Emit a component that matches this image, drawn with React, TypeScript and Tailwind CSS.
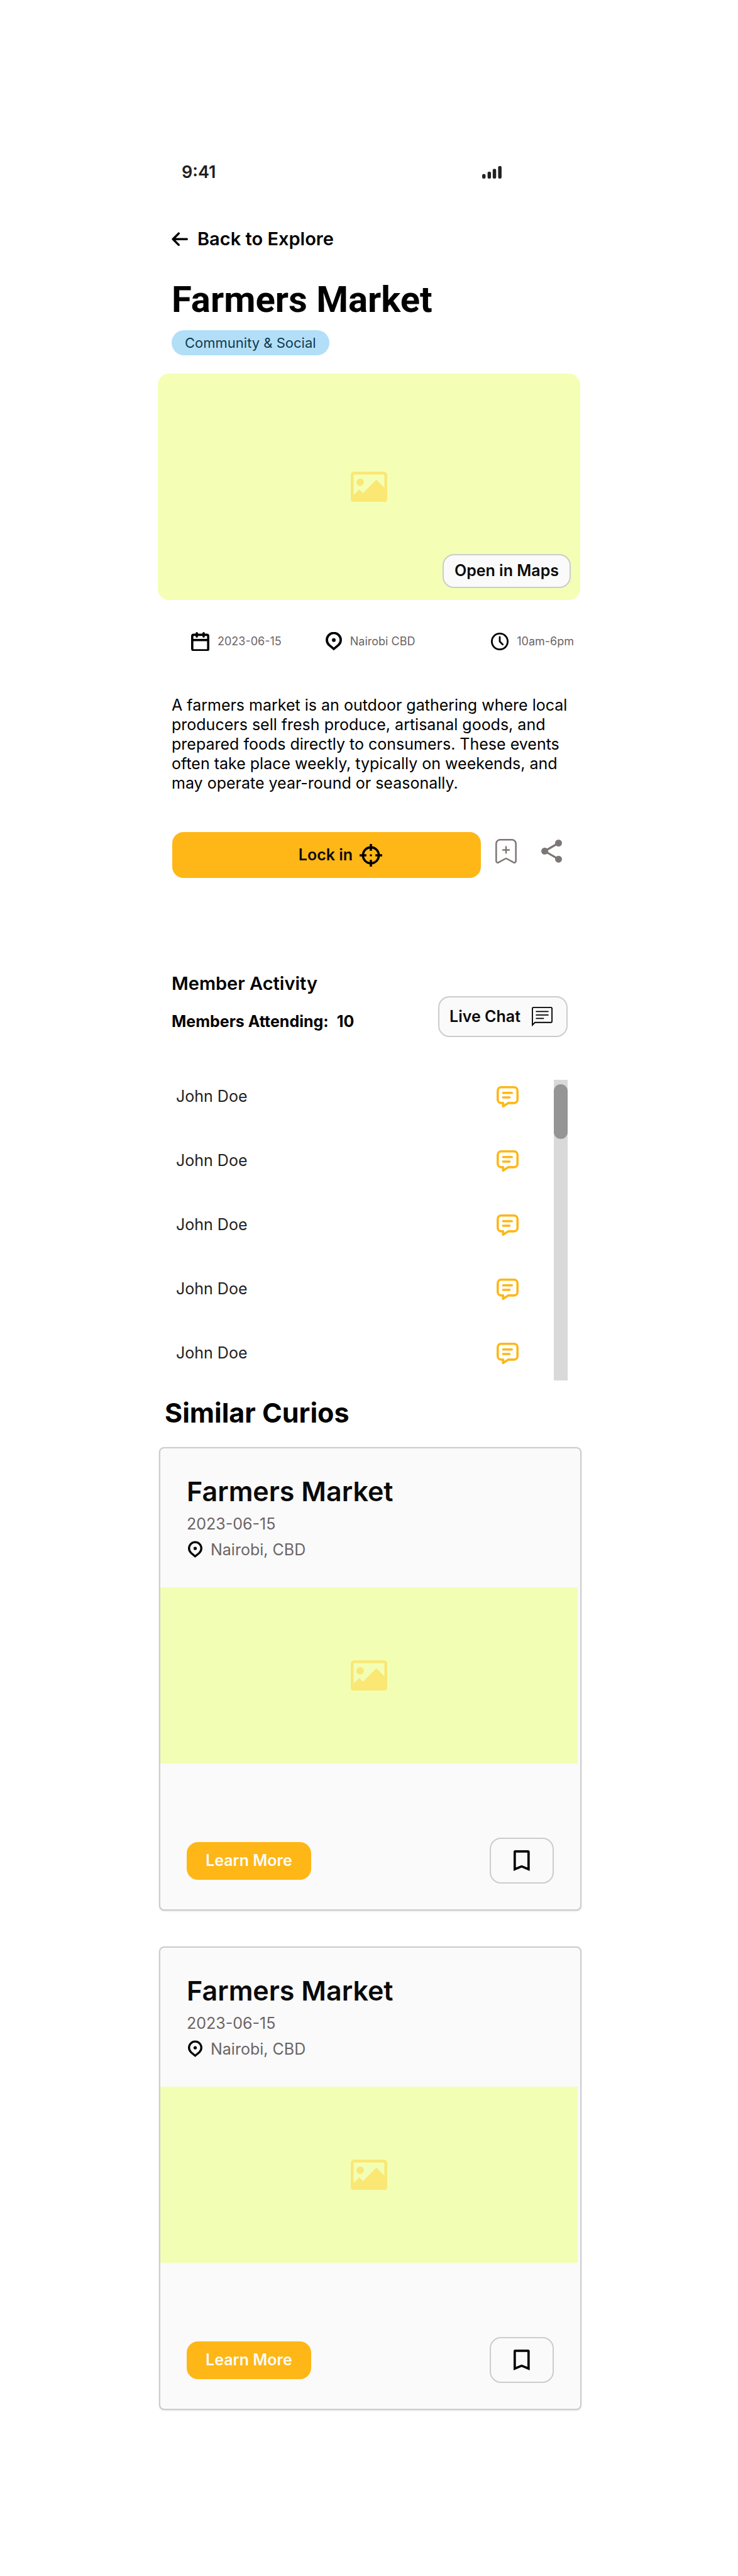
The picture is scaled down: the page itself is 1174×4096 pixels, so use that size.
import { useState } from "react";
import type { ReactNode } from "react";
import clsx from "clsx";

type Curio = {
  id: string;
  title: string;
  date: string;
  place: string;
};

const members = ["John Doe", "John Doe", "John Doe", "John Doe", "John Doe"];

const curios: Curio[] = [
  { id: "curio-1", title: "Farmers Market", date: "2023-06-15", place: "Nairobi, CBD" },
  { id: "curio-2", title: "Farmers Market", date: "2023-06-15", place: "Nairobi, CBD" },
];

function SignalIcon({ className }: { className?: string }) {
  return (
    <svg viewBox="0 0 34 22" fill="#212121" className={className} aria-hidden="true">
      <rect x="0" y="14" width="6" height="8" rx="2.4" />
      <rect x="9.5" y="10" width="6" height="12" rx="2.4" />
      <rect x="18.5" y="5" width="6" height="17" rx="2.4" />
      <rect x="28" y="0" width="6" height="22" rx="2.4" />
    </svg>
  );
}

function BackIcon({ className }: { className?: string }) {
  return (
    <svg viewBox="0 0 30 26" fill="none" stroke="currentColor" strokeWidth="4" strokeLinecap="round" strokeLinejoin="round" className={className} aria-hidden="true">
      <path d="M28 13H2.500M13 2.500 2.500 13 13 23.500" />
    </svg>
  );
}

function PictureIcon({ className }: { className?: string }) {
  return (
    <svg viewBox="0 0 64 54" fill="#fae774" className={className} aria-hidden="true">
      <path
        fillRule="evenodd"
        d="M6 0h52a6 6 0 0 1 6 6v42a6 6 0 0 1-6 6H6a6 6 0 0 1-6-6V6a6 6 0 0 1 6-6Zm0 5a1 1 0 0 0-1 1v35l10-10 6.500 6.500L45 14l14 14V6a1 1 0 0 0-1-1Z"
      />
      <circle cx="16.500" cy="18.500" r="6.500" />
    </svg>
  );
}

function CalendarIcon({ className }: { className?: string }) {
  return (
    <svg viewBox="0 0 32 34" fill="none" stroke="currentColor" strokeWidth="4" className={className} aria-hidden="true">
      <rect x="2" y="4.800" width="28" height="27.200" rx="2.500" />
      <path d="M2 14h28" />
      <path d="M10 2v6M22 2v6" strokeLinecap="round" />
    </svg>
  );
}

function PinIcon({ className }: { className?: string }) {
  return (
    <svg viewBox="0 0 28 32" fill="none" className={className} aria-hidden="true">
      <path d="M14 29 6 22.300A11.900 11.900 0 1 1 22 22.300Z" stroke="currentColor" strokeWidth="4" />
      <circle cx="14" cy="13.700" r="3.200" fill="currentColor" />
    </svg>
  );
}

function ClockIcon({ className }: { className?: string }) {
  return (
    <svg viewBox="0 0 30 30" fill="none" stroke="currentColor" strokeWidth="3" className={className} aria-hidden="true">
      <circle cx="15" cy="15" r="13.500" />
      <path d="M15 7.500V15l5 5" strokeLinecap="round" strokeLinejoin="round" />
    </svg>
  );
}

function CrosshairIcon({ className }: { className?: string }) {
  return (
    <svg viewBox="0 0 40 40" fill="none" stroke="currentColor" strokeWidth="4" className={className} aria-hidden="true">
      <circle cx="20" cy="20" r="14" />
      <path d="M20 0v12M20 28v12M0 20h12M28 20h12" />
      <circle cx="20" cy="20" r="2" fill="currentColor" stroke="none" />
    </svg>
  );
}

function BookmarkAddIcon({ className }: { className?: string }) {
  return (
    <svg viewBox="0 0 38 44" fill="none" stroke="currentColor" strokeWidth="2.800" strokeLinecap="round" strokeLinejoin="round" className={className} aria-hidden="true">
      <path d="M8.500 1.500h21a7 7 0 0 1 7 7V39c0 2.500-2 3.800-4 2.700l-12-6.500a3 3 0 0 0-3 0l-12 6.500c-2 1.100-4-.2-4-2.700V8.500a7 7 0 0 1 7-7Z" />
      <path d="M19 14v11M13.500 19.500h11" />
    </svg>
  );
}

function ShareIcon({ className }: { className?: string }) {
  return (
    <svg viewBox="0 0 36 40" fill="currentColor" className={className} aria-hidden="true">
      <path d="M30 6 6 20l24 14" fill="none" stroke="currentColor" strokeWidth="3.500" />
      <circle cx="30" cy="6" r="6" />
      <circle cx="6" cy="20" r="6" />
      <circle cx="30" cy="34" r="6" />
    </svg>
  );
}

function LiveChatIcon({ className }: { className?: string }) {
  return (
    <svg viewBox="0 0 36 34" fill="none" stroke="currentColor" strokeWidth="2" className={className} aria-hidden="true">
      <path d="M1 31.500V3a2 2 0 0 1 2-2h30a2 2 0 0 1 2 2v22a2 2 0 0 1-2 2H5.500Z" />
      <path d="M7 8h22M7 14h22M7 20h14" />
    </svg>
  );
}

function MessageIcon({ className }: { className?: string }) {
  return (
    <svg viewBox="0 0 39 38" fill="none" stroke="currentColor" strokeWidth="4" strokeLinecap="round" strokeLinejoin="round" className={className} aria-hidden="true">
      <path d="M8 2h23a6 6 0 0 1 6 6v16a6 6 0 0 1-6 6H20.500L11.500 36v-6H8a6 6 0 0 1-6-6V8a6 6 0 0 1 6-6Z" />
      <path d="M11.500 12h15.500M11.500 20H23" />
    </svg>
  );
}

function BookmarkIcon({ className }: { className?: string }) {
  return (
    <svg viewBox="0 0 28 36" fill="none" stroke="currentColor" strokeWidth="4" className={className} aria-hidden="true">
      <path d="M2 33V3a1 1 0 0 1 1-1h22a1 1 0 0 1 1 1v30l-12-5Z" />
    </svg>
  );
}

function Meta({ icon, className, children }: { icon: ReactNode; className?: string; children: ReactNode }) {
  return (
    <li className={clsx("flex items-center gap-[13px] text-[18px] leading-8 text-[#6b6466]", className)}>
      {icon}
      <span>{children}</span>
    </li>
  );
}

function CurioCard({ curio }: { curio: Curio }) {
  const [saved, setSaved] = useState(false);

  return (
    <article className="rounded-lg border-2 border-[#cccccc] bg-[#fafafa] pt-10 pb-[41px] shadow-sm">
      <div className="px-[42px]">
        <h3 className="text-[43px] leading-[56px] font-semibold text-[#0a0a0a]">{curio.title}</h3>
        <p className="mt-1 text-[25px] leading-10 text-[#6b6466]">{curio.date}</p>
        <p className="flex items-center gap-[13px] text-[25px] leading-[42px] text-[#6b6466]">
          <PinIcon className="ml-0.5 h-7 w-[23px] text-black" />
          {curio.place}
        </p>
      </div>
      <div className="mt-[39px] mr-1 flex h-[280px] items-center justify-center bg-[#f2feb4]">
        <PictureIcon className="w-[58px]" />
      </div>
      <div className="mt-[118px] flex items-center justify-between px-[42px]">
        <button type="button" className="h-[60px] rounded-[18px] bg-[#feb716] px-[30px] text-[25px] font-semibold text-[#fafafa]">
          Learn More
        </button>
        <button
          type="button"
          aria-label="Save curio"
          aria-pressed={saved}
          onClick={() => setSaved(!saved)}
          className="flex h-[73px] w-[102px] items-center justify-center rounded-[18px] border-2 border-[#cccccc]"
        >
          <BookmarkIcon className="h-[33px] text-black" />
        </button>
      </div>
    </article>
  );
}

export default function App() {
  return (
    <div className="bg-white pt-[254px] pb-[264px] pl-0.5 font-['Inter',sans-serif] text-black">
      <main className="mx-auto w-full max-w-[674px]">
        <div className="flex h-10 items-center justify-between pr-[127px] pl-[38px]">
          <span className="text-[27px] font-semibold text-[#212121]">9:41</span>
          <SignalIcon className="h-5" />
        </div>

        <div className="px-[22px]">
          <a href="#explore" className="mt-[66px] flex h-10 items-center gap-[15px] text-[29px] font-semibold">
            <BackIcon className="w-[26px]" />
            Back to Explore
          </a>
          <h1 className="mt-10 font-[Roboto,sans-serif] text-[58px] leading-[72px] font-bold">Farmers Market</h1>
          <span className="mt-[13px] flex h-10 w-fit items-center rounded-full bg-[#b2dff7] px-[21px] text-[22px] text-[#0f3a50]">
            Community &amp; Social
          </span>
        </div>

        <div className="relative mt-[29px] mr-0.5 flex h-[360px] items-center justify-center rounded-[18px] bg-[#f4ffb5]">
          <PictureIcon className="w-[58px]" />
          <button
            type="button"
            className="absolute right-[15px] bottom-[19px] h-[54px] rounded-[18px] border-2 border-[#cccccc] bg-[#fafafa] px-[17px] text-[25px] font-semibold text-[#0a0a0a]"
          >
            Open in Maps
          </button>
        </div>

        <ul className="mt-[50px] flex pr-3 pl-[53px]">
          <Meta icon={<CalendarIcon className="w-[29px] text-black" />}>2023-06-15</Meta>
          <Meta className="ml-[70px]" icon={<PinIcon className="w-[26px] text-black" />}>Nairobi CBD</Meta>
          <Meta className="ml-auto" icon={<ClockIcon className="w-7 text-black" />}>10am-6pm</Meta>
        </ul>

        <p className="mt-[70px] pr-3 pl-[22px] text-[25px] leading-[31px]">
          A farmers market is an outdoor gathering where local producers sell fresh produce, artisanal goods, and prepared foods
          directly to consumers. These events often take place weekly, typically on weekends, and may operate year-round or
          seasonally.
        </p>

        <div className="mt-[62px] flex items-center pr-[31px] pl-[23px]">
          <button
            type="button"
            className="flex h-[73px] flex-1 items-center justify-center gap-[11px] rounded-[18px] bg-[#feb716] pl-11 text-[25px] font-semibold text-[#0a0a0a]"
          >
            Lock in
            <CrosshairIcon className="w-9 text-black" />
          </button>
          <button type="button" aria-label="Bookmark" className="ml-[23px] pb-3 text-[#7d7676]">
            <BookmarkAddIcon className="w-[34px]" />
          </button>
          <button type="button" aria-label="Share" className="ml-[39px] pb-3 text-[#7d7676]">
            <ShareIcon className="w-[33px]" />
          </button>
        </div>

        <section className="mt-[148px] px-[22px]">
          <h2 className="text-[29px] leading-10 font-semibold">Member Activity</h2>
          <div className="flex items-start justify-between">
            <p className="mt-5 flex gap-[13px] text-[25px] leading-10 font-bold">
              Members Attending: <span>10</span>
            </p>
            <button
              type="button"
              className="flex h-[65px] items-center gap-[18px] rounded-[18px] border-2 border-[#cccccc] bg-[#fafafa] pr-[22px] pl-4 text-[25px] font-semibold text-[#0a0a0a]"
            >
              Live Chat
              <LiveChatIcon className="w-[33px] text-black" />
            </button>
          </div>

          <div className="mt-11 flex">
            <ul className="flex-1 pr-[56px] pl-[7px]">
              {members.map((name, i) => (
                <li key={i} className="flex h-[102px] items-center justify-between text-[25px] text-[#212121]">
                  {name}
                  <button type="button" aria-label={`Message ${name}`} className="text-[#feb716]">
                    <MessageIcon className="w-[35px]" />
                  </button>
                </li>
              ))}
            </ul>
            <div className="mt-6 mb-2 w-[22px] bg-[#d9d9d9] pt-[7px]">
              <div className="h-[87px] rounded-full bg-[#959595]" />
            </div>
          </div>
        </section>

        <h2 className="mt-[15px] pl-[11px] text-[43px] leading-[56px] font-bold">Similar Curios</h2>
        <div className="mt-[27px] ml-0.5 flex flex-col gap-[57px]">
          {curios.map((curio) => (
            <CurioCard key={curio.id} curio={curio} />
          ))}
        </div>
      </main>
    </div>
  );
}
